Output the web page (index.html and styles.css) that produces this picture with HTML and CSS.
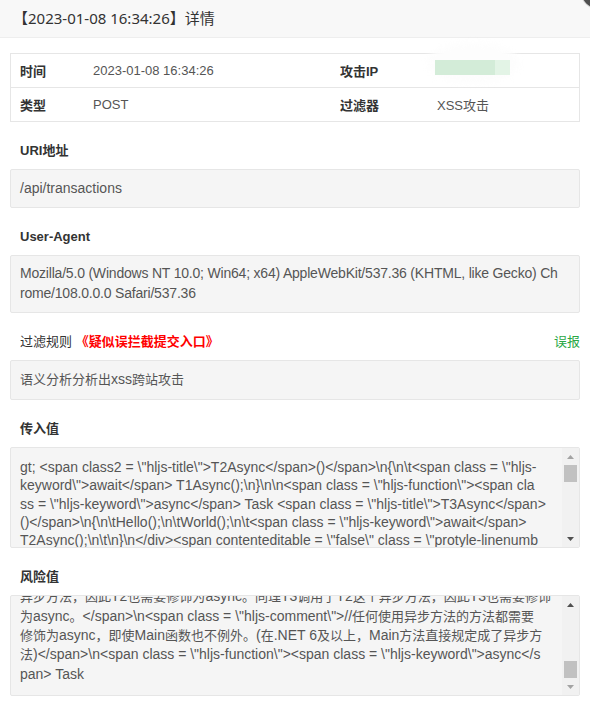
FILE: index.html
```html
<!DOCTYPE html>
<html lang="zh-CN">
<head>
<meta charset="utf-8">
<title>详情</title>
<link rel="stylesheet" href="styles.css">
</head>
<body>
<div class="header">
  <span class="title">【2023-01-08 16:34:26】详情</span>
  <span class="close"></span>
</div>
<div class="content">
  <div class="info">
    <div class="info-row">
      <div class="cell cell-label">时间</div>
      <div class="cell cell-value">2023-01-08 16:34:26</div>
      <div class="cell cell-label">攻击IP</div>
      <div class="cell cell-value"></div>
    </div>
    <div class="info-row info-row-last">
      <div class="cell cell-label">类型</div>
      <div class="cell cell-value">POST</div>
      <div class="cell cell-label">过滤器</div>
      <div class="cell cell-value">XSS攻击</div>
    </div>
    <div class="ip-haze"></div>
    <div class="ip-block"></div>
  </div>

  <div class="section">
    <div class="section-head"><span>URI地址</span></div>
    <div class="box">/api/transactions</div>
  </div>

  <div class="section">
    <div class="section-head"><span>User-Agent</span></div>
    <div class="box box-multi"><div class="line">Mozilla/5.0 (Windows NT 10.0; Win64; x64) AppleWebKit/537.36 (KHTML, like Gecko) Ch</div><div class="line">rome/108.0.0.0 Safari/537.36</div></div>
  </div>

  <div class="section">
    <div class="section-head"><span class="head-normal">过滤规则 <span class="warn">《疑似误拦截提交入口》</span></span><span class="report">误报</span></div>
    <div class="box"><span class="zh">语义分析分析出</span>xss<span class="zh">跨站攻击</span></div>
  </div>

  <div class="section">
    <div class="section-head"><span>传入值</span></div>
    <div class="scrollbox">
      <div class="scroll-text">
        <div class="line">gt; &lt;span class2 = \"hljs-title\"&gt;T2Async&lt;/span&gt;()&lt;/span&gt;\n{\n\t&lt;span class = \"hljs-</div>
        <div class="line">keyword\"&gt;await&lt;/span&gt; T1Async();\n}\n\n&lt;span class = \"hljs-function\"&gt;&lt;span cla</div>
        <div class="line">ss = \"hljs-keyword\"&gt;async&lt;/span&gt; Task &lt;span class = \"hljs-title\"&gt;T3Async&lt;/span&gt;</div>
        <div class="line">()&lt;/span&gt;\n{\n\tHello();\n\tWorld();\n\t&lt;span class = \"hljs-keyword\"&gt;await&lt;/span&gt;</div>
        <div class="line">T2Async();\n\t\n}\n&lt;/div&gt;&lt;span contenteditable = \"false\" class = \"protyle-linenumb</div>
      </div>
      <div class="sb">
        <div class="sb-btn"><svg width="7" height="4" viewBox="0 0 7 4"><polygon points="0,4 7,4 3.5,0" class="arrow-off"/></svg></div>
        <div class="sb-track"><div class="sb-thumb"></div></div>
        <div class="sb-btn"><svg width="7" height="4" viewBox="0 0 7 4"><polygon points="0,0 7,0 3.5,4" class="arrow-on"/></svg></div>
      </div>
    </div>
  </div>

  <div class="section">
    <div class="section-head"><span>风险值</span></div>
    <div class="scrollbox">
      <div class="scroll-text scroll-end">
        <div class="line"><span class="zh">异步方法，因此</span>T2<span class="zh">也需要修饰为</span>async<span class="zh">。同理</span>T3<span class="zh">调用了</span>T2<span class="zh">这个异步方法，因此</span>T3<span class="zh">也需要修饰</span></div>
        <div class="line"><span class="zh">为</span>async<span class="zh">。</span>&lt;/span&gt;\n&lt;span class = \"hljs-comment\"&gt;//<span class="zh">任何使用异步方法的方法都需要</span></div>
        <div class="line"><span class="zh">修饰为</span>async<span class="zh">，即使</span>Main<span class="zh">函数也不例外。</span>(<span class="zh">在</span>.NET 6<span class="zh">及以上，</span>Main<span class="zh">方法直接规定成了异步方</span></div>
        <div class="line"><span class="zh">法</span>)&lt;/span&gt;\n&lt;span class = \"hljs-function\"&gt;&lt;span class = \"hljs-keyword\"&gt;async&lt;/s</div>
        <div class="line">pan&gt; Task</div>
      </div>
      <div class="sb">
        <div class="sb-btn"><svg width="7" height="4" viewBox="0 0 7 4"><polygon points="0,4 7,4 3.5,0" class="arrow-on"/></svg></div>
        <div class="sb-track sb-track-end"><div class="sb-thumb"></div></div>
        <div class="sb-btn"><svg width="7" height="4" viewBox="0 0 7 4"><polygon points="0,0 7,0 3.5,4" class="arrow-off"/></svg></div>
      </div>
    </div>
  </div>
</div>
</body>
</html>
```
FILE: styles.css
```css
html, body {
  margin: 0;
  padding: 0;
  height: 100%;
  overflow: hidden;
  background: #fff;
}
body {
  font-family: "Liberation Sans", "Noto Sans CJK SC", sans-serif;
  font-size: 14px;
  color: #333;
}
.header {
  position: relative;
  height: 37px;
  line-height: 36px;
  background: #f8f8f8;
  border-bottom: 1px solid #eee;
  padding-left: 13px;
}
.title {
  font-family: "Noto Sans", "Noto Sans CJK SC", sans-serif;
  font-size: 15px;
  color: #333;
}
.close {
  position: absolute;
  right: -22px;
  top: -22px;
  width: 30px;
  height: 30px;
  border-radius: 50%;
  background: #505050;
  box-shadow: 0 0 0 1px #d8d8d8;
}
.content {
  padding: 15px 10px 0;
}
.info {
  position: relative;
  border: 1px solid #e6e6e6;
}
.info-row {
  display: grid;
  grid-template-columns: 73px 247px 97px 1fr;
  align-items: center;
  height: 33px;
  border-bottom: 1px solid #e6e6e6;
}
.info-row-last {
  border-bottom: 0;
  height: 33px;
}
.cell {
  padding-left: 9px;
  font-size: 13px;
}
.cell-label {
  font-weight: bold;
  color: #333;
}
.cell-value {
  color: #555;
}
.ip-haze {
  position: absolute;
  left: 416px;
  top: -11px;
  width: 92px;
  height: 40px;
  border-radius: 50%;
  background: #fdfdfd;
  filter: blur(3px);
}
.ip-block {
  position: absolute;
  left: 424px;
  top: 6px;
  width: 75px;
  height: 15px;
  background: linear-gradient(to right, #d3ecd8 0, #d3ecd8 60px, #e3f4e6 60px);
}
.section {
  margin-top: 19px;
}
.section-head {
  display: flex;
  justify-content: space-between;
  line-height: 20px;
  font-size: 13px;
  font-weight: bold;
  color: #333;
  padding-left: 10px;
  margin-bottom: 8px;
}
.head-normal {
  font-weight: normal;
}
.warn {
  color: #ff0000;
  font-weight: bold;
}
.report {
  color: #2aa745;
  font-weight: normal;
}
.box {
  background: #f5f5f5;
  border: 1px solid #e6e6e6;
  border-radius: 2px;
  padding: 8px 9px 9px;
  line-height: 20px;
  font-size: 14px;
  color: #555;
}
.box-multi {
  line-height: 19.5px;
  letter-spacing: -0.2px;
}
.zh {
  font-size: 13px;
}
.line {
  white-space: nowrap;
}
.scrollbox {
  display: flex;
  box-sizing: border-box;
  height: 101px;
  background: #f5f5f5;
  border: 1px solid #e6e6e6;
  border-radius: 2px;
}
.scroll-text {
  flex: 1;
  min-width: 0;
  overflow: hidden;
  display: flex;
  flex-direction: column;
  padding: 10px 9px 0;
  line-height: 18.35px;
  font-size: 14px;
  color: #555;
}
.scroll-text .line {
  flex-shrink: 0;
}
.scroll-end {
  justify-content: flex-end;
  padding: 0 9px 12px;
}
.sb {
  width: 17px;
  flex-shrink: 0;
  display: flex;
  flex-direction: column;
  background: #f1f1f1;
}
.sb-btn {
  height: 17px;
  display: flex;
  align-items: center;
  justify-content: center;
}
.sb-btn svg {
  display: block;
}
.arrow-on {
  fill: #505050;
}
.arrow-off {
  fill: #a3a3a3;
}
.sb-track {
  flex: 1;
  display: flex;
  flex-direction: column;
}
.sb-track-end {
  justify-content: flex-end;
}
.sb-thumb {
  height: 17px;
  margin: 0 2px;
  background: #c1c1c1;
}
```
